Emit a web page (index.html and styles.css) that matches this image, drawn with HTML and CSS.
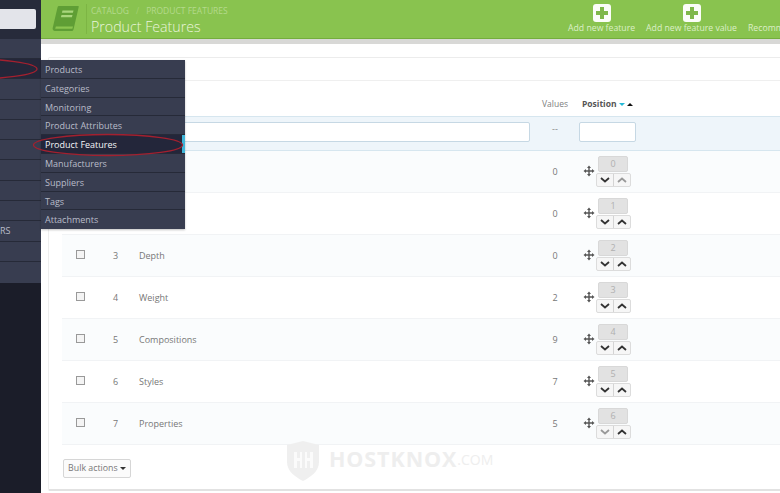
FILE: index.html
```html
<!DOCTYPE html>
<html lang="en">
<head>
<meta charset="utf-8">
<title>Product Features</title>
<link rel="stylesheet" href="styles.css">
</head>
<body>
<div class="page">
  <aside class="sidebar">
    <div class="side-top"><div class="side-search"></div></div>
    <div class="side-row tall"></div>
    <div class="side-row active"></div>
    <div class="side-row"></div>
    <div class="side-row"></div>
    <div class="side-row"></div>
    <div class="side-row"></div>
    <div class="side-row"></div>
    <div class="side-row"></div>
    <div class="side-row"></div>
    <div class="side-row text">RS</div>
    <div class="side-row"></div>
    <div class="side-row last"></div>
  </aside>
  <main class="main">
    <header class="topbar">
      <svg class="book" viewBox="0 0 28 28" width="28" height="28">
        <path d="M7 1h19c.6 0 .9.5.7 1L21.500 24.500c-.2.8-.8 1.500-1.800 1.500H3C1.300 26 .3 24.500.7 23L5.500 2.500C5.700 1.500 6.200 1 7 1z" fill="#5f9e35"/>
        <path d="M3.800 21.500h17.200l-.6 2.300H3.200z" fill="#8bc550"/>
        <path d="M10.500 5.500h11l-.6 2.300h-11zM9.500 10h11l-.6 2.300h-11z" fill="#a9d67d"/>
      </svg>
      <div class="heading">
        <div class="crumbs"><span>Catalog</span><span class="sep">/</span><span>Product Features</span></div>
        <h1>Product Features</h1>
      </div>
      <div class="actions">
        <div class="action">
          <span class="plus"><svg viewBox="0 0 18 18" width="18" height="18"><path d="M7 3h4v4h4v4h-4v4H7v-4H3V7h4z" fill="#7fb84a"/></svg></span>
          <span>Add new feature</span>
        </div>
        <div class="action">
          <span class="plus"><svg viewBox="0 0 18 18" width="18" height="18"><path d="M7 3h4v4h4v4h-4v4H7v-4H3V7h4z" fill="#7fb84a"/></svg></span>
          <span>Add new feature value</span>
        </div>
        <div class="action more"><span class="plus hidden"></span><span>Recommended</span></div>
      </div>
    </header>
    <div class="strip"></div>
    <section class="card">
      <div class="card-head"></div>
      <table class="grid">
        <colgroup><col class="c-check"><col class="c-id"><col class="c-name"><col class="c-values"><col class="c-pos"></colgroup>
        <thead>
          <tr class="head-row">
            <th></th><th></th><th></th><th class="center">Values</th>
            <th class="pos-head">Position <span class="arrow-down"></span> <span class="arrow-up"></span></th>
          </tr>
          <tr class="filter-row">
            <th></th><th></th>
            <th class="name-filter"><input class="field wide" type="text"></th>
            <th class="center dash">--</th>
            <th><input class="field narrow" type="text"></th>
          </tr>
        </thead>
        <tbody>
          <tr class="tint"><td><span class="check"></span></td><td>1</td><td>Height</td><td class="center">0</td><td><div class="pos"><svg class="move" viewBox="0 0 12 12" width="12" height="12"><use href="#mv"/></svg><div class="pos-box"><div class="num">0</div><div class="btns"><span class="btn"><svg viewBox="0 0 10 6" width="10" height="6"><path d="M1 1l4 3.500L9 1" class="chev"/></svg></span><span class="btn"><svg viewBox="0 0 10 6" width="10" height="6"><path d="M1 5l4-3.500L9 5" class="chev dim"/></svg></span></div></div></div></td></tr>
          <tr><td><span class="check"></span></td><td>2</td><td>Width</td><td class="center">0</td><td><div class="pos"><svg class="move" viewBox="0 0 12 12" width="12" height="12"><use href="#mv"/></svg><div class="pos-box"><div class="num">1</div><div class="btns"><span class="btn"><svg viewBox="0 0 10 6" width="10" height="6"><path d="M1 1l4 3.500L9 1" class="chev"/></svg></span><span class="btn"><svg viewBox="0 0 10 6" width="10" height="6"><path d="M1 5l4-3.500L9 5" class="chev"/></svg></span></div></div></div></td></tr>
          <tr class="tint"><td><span class="check"></span></td><td>3</td><td>Depth</td><td class="center">0</td><td><div class="pos"><svg class="move" viewBox="0 0 12 12" width="12" height="12"><use href="#mv"/></svg><div class="pos-box"><div class="num">2</div><div class="btns"><span class="btn"><svg viewBox="0 0 10 6" width="10" height="6"><path d="M1 1l4 3.500L9 1" class="chev"/></svg></span><span class="btn"><svg viewBox="0 0 10 6" width="10" height="6"><path d="M1 5l4-3.500L9 5" class="chev"/></svg></span></div></div></div></td></tr>
          <tr><td><span class="check"></span></td><td>4</td><td>Weight</td><td class="center">2</td><td><div class="pos"><svg class="move" viewBox="0 0 12 12" width="12" height="12"><use href="#mv"/></svg><div class="pos-box"><div class="num">3</div><div class="btns"><span class="btn"><svg viewBox="0 0 10 6" width="10" height="6"><path d="M1 1l4 3.500L9 1" class="chev"/></svg></span><span class="btn"><svg viewBox="0 0 10 6" width="10" height="6"><path d="M1 5l4-3.500L9 5" class="chev"/></svg></span></div></div></div></td></tr>
          <tr class="tint"><td><span class="check"></span></td><td>5</td><td>Compositions</td><td class="center">9</td><td><div class="pos"><svg class="move" viewBox="0 0 12 12" width="12" height="12"><use href="#mv"/></svg><div class="pos-box"><div class="num">4</div><div class="btns"><span class="btn"><svg viewBox="0 0 10 6" width="10" height="6"><path d="M1 1l4 3.500L9 1" class="chev"/></svg></span><span class="btn"><svg viewBox="0 0 10 6" width="10" height="6"><path d="M1 5l4-3.500L9 5" class="chev"/></svg></span></div></div></div></td></tr>
          <tr><td><span class="check"></span></td><td>6</td><td>Styles</td><td class="center">7</td><td><div class="pos"><svg class="move" viewBox="0 0 12 12" width="12" height="12"><use href="#mv"/></svg><div class="pos-box"><div class="num">5</div><div class="btns"><span class="btn"><svg viewBox="0 0 10 6" width="10" height="6"><path d="M1 1l4 3.500L9 1" class="chev"/></svg></span><span class="btn"><svg viewBox="0 0 10 6" width="10" height="6"><path d="M1 5l4-3.500L9 5" class="chev"/></svg></span></div></div></div></td></tr>
          <tr class="tint"><td><span class="check"></span></td><td>7</td><td>Properties</td><td class="center">5</td><td><div class="pos"><svg class="move" viewBox="0 0 12 12" width="12" height="12"><use href="#mv"/></svg><div class="pos-box"><div class="num">6</div><div class="btns"><span class="btn"><svg viewBox="0 0 10 6" width="10" height="6"><path d="M1 1l4 3.500L9 1" class="chev dim"/></svg></span><span class="btn"><svg viewBox="0 0 10 6" width="10" height="6"><path d="M1 5l4-3.500L9 5" class="chev"/></svg></span></div></div></div></td></tr>
        </tbody>
      </table>
      <div class="card-foot"><div class="bulk">Bulk actions <span class="caret"></span></div></div>
    </section>
  </main>
</div>

<nav class="flyout">
  <div class="fly-item">Products</div>
  <div class="fly-item">Categories</div>
  <div class="fly-item">Monitoring</div>
  <div class="fly-item">Product Attributes</div>
  <div class="fly-item current">Product Features</div>
  <div class="fly-item">Manufacturers</div>
  <div class="fly-item">Suppliers</div>
  <div class="fly-item">Tags</div>
  <div class="fly-item">Attachments</div>
</nav>

<svg class="marks" viewBox="0 0 780 493" width="780" height="493">
  <ellipse cx="-40" cy="69" rx="77" ry="10.500" class="ring"/>
  <ellipse cx="108" cy="145" rx="74.500" ry="10.500" class="ring"/>
</svg>

<div class="watermark">
  <svg viewBox="0 0 34 40" width="34" height="40"><path d="M1 4 17 0l16 4v17c0 9-8 15-16 19C9 36 1 30 1 21z" fill="#efefef"/><path d="M8 11h3v6h3v-6h2v16h-2v-7h-3v7H8zM19 11h2v6h3v-6h3v16h-3v-7h-3v7h-2z" fill="#fbfbfb"/></svg>
  <span class="wm-name">HOSTKNOX</span><span class="wm-com">.COM</span>
</div>

<svg class="defs" width="0" height="0"><defs><g id="mv"><path d="M6 .5 8 3H6.700v2.300H9V4l2.500 2L9 8V6.700H6.700V9H8l-2 2.500L4 9h1.300V6.700H3V8L.5 6 3 4v1.300h2.300V3H4z" fill="#555"/></g></defs></svg>
</body>
</html>
```
FILE: styles.css
```css
* { box-sizing: border-box; }
html, body { margin: 0; padding: 0; }
body {
  width: 780px;
  height: 493px;
  overflow: hidden;
  position: relative;
  background: #fff;
  font-family: "Open Sans", "Liberation Sans", sans-serif;
  font-size: 9px;
  color: #777;
}
.page { display: flex; width: 780px; height: 493px; }

/* sidebar */
.sidebar {
  flex: 0 0 41px;
  background: #1b1d29;
  display: flex;
  flex-direction: column;
}
.side-top { height: 39px; padding-top: 9px; background: #272b3b; }
.side-search { width: 36px; height: 20px; background: #e3e4ea; border-radius: 0 2px 2px 0; }
.side-row {
  height: 20.300px;
  background: #383d50;
  border-bottom: 1px solid #262a38;
  color: #b9bcc8;
  font-size: 9px;
  line-height: 19px;
}
.side-row.tall { height: 20px; }
.side-row.active { background: #24273a; }
.side-row.last { height: 21px; border-bottom: 0; }

/* header */
.main { flex: 1 1 auto; min-width: 0; overflow: hidden; display: flex; flex-direction: column; }
.topbar {
  height: 39px;
  flex: none;
  display: flex;
  align-items: flex-start;
  background: #89c34f;
  border-bottom: 1px solid #74ad3d;
  color: #fff;
}
.book { margin: 5px 0 0 11px; flex: none; }
.heading {
  margin: 4px 0 0 6px;
  padding: 1px 0 0 4px;
  height: 30px;
  border-left: 1px solid #7db544;
  flex: none;
}
.crumbs {
  font-size: 8.500px;
  line-height: 11px;
  text-transform: uppercase;
  color: #b4da8c;
  display: flex;
  gap: 7px;
}
.crumbs .sep { color: #a3d072; }
.heading h1 {
  margin: 1px 0 0;
  font-size: 14.200px;
  line-height: 19px;
  font-weight: 300;
  color: #e9f5dc;
}
.actions { display: flex; gap: 11px; margin-left: auto; margin-right: -40px; flex: none; }
.action {
  display: flex;
  flex-direction: column;
  align-items: center;
  font-size: 8.700px;
  line-height: 12px;
  color: #dcefc8;
  white-space: nowrap;
  padding-top: 4px;
}
.action.more { width: 72px; align-items: flex-start; }
.plus { width: 18px; height: 18px; background: #fbfdf8; border-radius: 3px; display: block; }
.plus svg { display: block; }
.plus.hidden { background: transparent; }
.strip { height: 5px; flex: none; background: #d8d8d6; }

/* card */
.card {
  margin: 13px -4px 2px 7px;
  flex: 1 1 auto;
  border-top: 1px solid #ececec;
  border-left: 1px solid #eeeeee;
  border-bottom: 2px solid #e2e2e2;
  padding-left: 13px;
  border-radius: 2px;
}
.card-head { height: 23px; margin-left: -13px; border-bottom: 1px solid #efefef; }
.grid { width: 722px; table-layout: fixed; border-collapse: collapse; }
.c-check { width: 36px; }
.c-id { width: 41px; }
.c-name { width: 396px; }
.c-values { width: 40px; }
.c-pos { width: 209px; }
.grid th, .grid td { padding: 0; font-weight: 400; text-align: left; }
.grid .center { text-align: center; }
.head-row { height: 35px; }
.head-row th { vertical-align: top; padding-top: 17px; line-height: 12px; font-size: 8.500px; color: #808080; }
.grid .pos-head { font-weight: 700; color: #555; padding-left: 7px; }
.arrow-down, .arrow-up { display: inline-block; width: 0; height: 0; border-left: 3px solid transparent; border-right: 3px solid transparent; vertical-align: 1px; }
.arrow-down { border-top: 3px solid #25b9d7; }
.arrow-up { border-bottom: 3px solid #111; }
.filter-row { height: 34px; background: #eef5fa; border-top: 1px solid #d6e6ef; border-bottom: 1px solid #d6e6ef; }
.filter-row th { vertical-align: top; padding-top: 5px; }
.grid .dash { color: #888; line-height: 14px; }
.field { display: block; height: 20px; background: #fff; border: 1px solid #c6d8e4; border-radius: 2px; padding: 0; }
.wide { width: 391px; }
.narrow { width: 57px; margin-left: 4px; }
.grid tbody tr { height: 42px; border-bottom: 1px solid #f1f3f5; }
.grid tbody tr.tint { background: #fafcfd; }
.grid tbody td:nth-child(2) { padding-left: 15px; }
.grid tbody td { color: #777; }
.check { display: block; width: 9px; height: 9px; border: 1px solid #999; background: #f4f4f4; margin: -2px 0 0 14px; }
.pos { display: flex; align-items: center; padding-left: 8px; height: 41px; }
.move { flex: none; margin-right: 1px; }
.pos-box { width: 35px; }
.num { width: 30px; height: 16px; margin-left: 2px; background: #e2e2e2; border: 1px solid #d8d8d8; border-radius: 2px; text-align: center; line-height: 14px; color: #b0b0b0; font-size: 9px; }
.btns { display: flex; height: 14px; margin-top: 1px; border: 1px solid #dcdcdc; border-radius: 2px; background: #f6f6f6; }
.btn { flex: 1; display: flex; align-items: center; justify-content: center; }
.btn + .btn { border-left: 1px solid #d4d4d4; }
.chev { fill: none; stroke: #333; stroke-width: 1.800; }
.chev.dim { stroke: #999; }
.card-foot { padding-top: 14px; }
.bulk {
  display: inline-block;
  height: 19px;
  width: 68px;
  margin-left: 1px;
  border: 1px solid #d6d6d6;
  border-radius: 2px;
  background: #fbfbfb;
  text-align: center;
  line-height: 17px;
  color: #777;
  font-size: 8.800px;
  white-space: nowrap;
}
.caret { display: inline-block; width: 0; height: 0; border-left: 3px solid transparent; border-right: 3px solid transparent; border-top: 3px solid #333; vertical-align: 1px; }

/* overlays */
.flyout {
  position: absolute;
  left: 41px;
  top: 60px;
  width: 144px;
  height: 169px;
  background: #383d50;
  box-shadow: 0 1px 2px rgba(0,0,0,.25);
}
.fly-item {
  height: 18.800px;
  line-height: 20px;
  padding-left: 4px;
  border-bottom: 1px solid #262a38;
  color: #b9bcc9;
  font-size: 9px;
}
.fly-item:last-child { border-bottom: 0; }
.fly-item.current {
  background: #23263a;
  color: #f4f5f8;
  box-shadow: inset -3px 0 0 #3fb5d8;
}
.marks { position: absolute; left: 0; top: 0; pointer-events: none; }
.ring { fill: none; stroke: #a3202f; stroke-width: 1.300; }
.watermark {
  position: absolute;
  left: 286px;
  top: 441px;
  display: flex;
  align-items: center;
  height: 40px;
  color: #eeeeee;
  font-weight: 700;
}
.wm-name { margin-left: 9px; font-size: 21.500px; letter-spacing: .9px; margin-top: -6px; }
.wm-com { font-size: 14px; font-weight: 400; margin-top: -3px; }
.defs { position: absolute; }
```
